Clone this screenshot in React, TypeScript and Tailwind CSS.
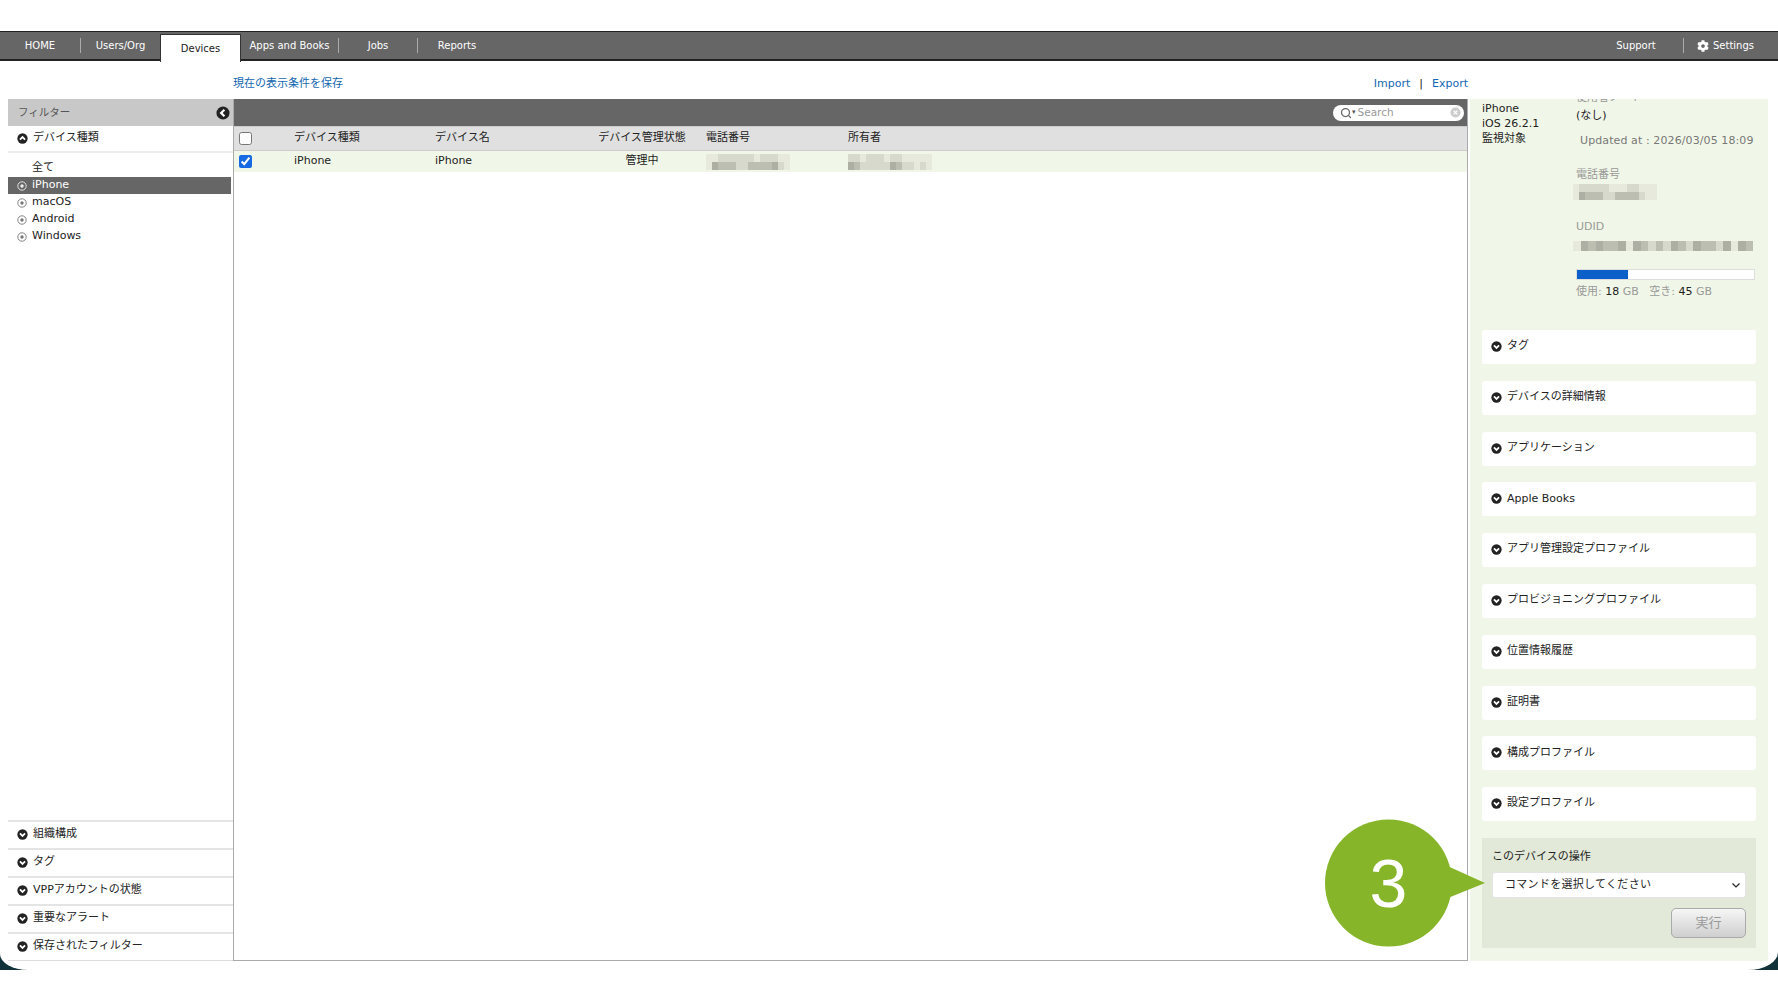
import { Search } from "lucide-react";
import { FaCog } from "react-icons/fa";

const FONT = "font-['DejaVu_Sans','Noto_Sans_CJK_JP',sans-serif]";

const Chevron = ({ up = false, left = false, size = 11 }: { up?: boolean; left?: boolean; size?: number }) => (
  <svg width={size} height={size} viewBox="0 0 12 12" className="shrink-0">
    <circle cx="6" cy="6" r="5.6" fill="#222" />
    <path
      d={left ? "M7.2 3.2 4.4 6l2.8 2.8" : up ? "M3.2 7.2 6 4.4l2.8 2.8" : "M3.2 4.8 6 7.6l2.8-2.8"}
      fill="none"
      stroke="#fff"
      strokeWidth="1.9"
    />
  </svg>
);

const Bullet = ({ light = false }: { light?: boolean }) => (
  <svg width="10" height="10" viewBox="0 0 10 10" className="shrink-0">
    <circle cx="5" cy="5" r="4.2" fill="none" stroke={light ? "#eee" : "#777"} strokeWidth="0.9" />
    <circle cx="5" cy="5" r="1.7" fill={light ? "#eee" : "#777"} />
  </svg>
);

// pixelated blocks standing in for the blurred-out values
const Mosaic = ({ rows, cell, h }: { rows: string[][]; cell: number; h: number }) => (
  <div className="flex flex-col">
    {rows.map((row, i) => (
      <div key={i} className="flex">
        {row.map((c, j) => (
          <div key={j} className={c} style={{ width: cell, height: h }} />
        ))}
      </div>
    ))}
  </div>
);

const L = "bg-[#e6e9dc]";
const M = "bg-[#d6d9cc]";
const D = "bg-[#bcbeb2]";
const X = "bg-[#adafa4]";

const phoneRows = [
  [L, M, M, M, M, M, L, L, L, M, M, L, L, L],
  [L, X, D, D, D, M, M, D, D, D, D, M, L, L],
];
const tablePhoneRows = [
  [L, L, M, M, M, M, M, M, L, M, M, M, L, L],
  [L, X, D, D, D, M, M, D, D, D, D, X, M, L],
];
const ownerRows = [
  [M, M, L, M, M, M, L, M, M, L, L, L, L, L],
  [X, D, M, M, M, M, M, X, D, M, M, L, M, L],
];
const udidRows = [[L, X, D, X, D, D, X, L, X, D, M, D, M, X, D, M, X, D, D, M, X, L, X, D]];

const CARDS = [
  "タグ",
  "デバイスの詳細情報",
  "アプリケーション",
  "Apple Books",
  "アプリ管理設定プロファイル",
  "プロビジョニングプロファイル",
  "位置情報履歴",
  "証明書",
  "構成プロファイル",
  "設定プロファイル",
];

const FILTERS = ["組織構成", "タグ", "VPPアカウントの状態", "重要なアラート", "保存されたフィルター"];

const NavItem = ({ label, className }: { label: string; className: string }) => (
  <div className={`flex items-center justify-center text-white ${className}`}>{label}</div>
);

const Divider = () => <div className="w-px h-[15px] bg-[#aaa]" />;

const Navbar = () => (
  <nav className="h-[30px] bg-[#666] border-t border-t-[#222] border-b-2 border-b-[#222] flex items-center text-[10px] shrink-0">
    <NavItem label="HOME" className="w-[80px]" />
    <Divider />
    <NavItem label="Users/Org" className="w-[79px]" />
    <div className="w-[81px] h-[28px] mt-[3px] bg-white border-t border-x border-[#333] flex items-center justify-center text-[#222] -mb-[2px]">
      Devices
    </div>
    <NavItem label="Apps and Books" className="w-[97px]" />
    <Divider />
    <NavItem label="Jobs" className="w-[78px]" />
    <Divider />
    <NavItem label="Reports" className="w-[78px]" />
    <div className="flex-1" />
    <NavItem label="Support" className="w-[50px]" />
    <div className="w-[22px]" />
    <Divider />
    <FaCog className="text-white ml-[13px] mr-[4px]" size={12} />
    <NavItem label="Settings" className="mr-[24px]" />
  </nav>
);

const Sidebar = () => (
  <aside className="w-[225px] ml-[8px] flex flex-col shrink-0 text-[11px] text-[#222]">
    <div className="h-[27px] bg-[#c8c8c8] flex items-center justify-between pl-[10px] pr-[3px] text-[#555] text-[10.5px]">
      <span>フィルター</span>
      <Chevron left size={14} />
    </div>
    <div className="h-[28px] border-b-2 border-[#eee] flex items-center gap-[5px] pl-[9px] mt-[-1px]">
      <Chevron up />
      <span>デバイス種類</span>
    </div>
    <div className="flex-1 pt-[6px] pr-[2px]">
      <div className="h-[17px] pl-[24px] mt-[1px] flex items-center">全て</div>
      {["iPhone", "macOS", "Android", "Windows"].map((os, i) => (
        <div
          key={os}
          className={`h-[17px] flex items-center gap-[5px] pl-[9px] ${i === 0 ? "bg-[#666] text-white" : ""}`}
        >
          <Bullet light={i === 0} />
          {os}
        </div>
      ))}
    </div>
    {FILTERS.map((f) => (
      <div key={f} className="h-[28px] border-t-2 border-[#e4e4e4] flex items-center gap-[5px] pl-[9px] pb-[2px]">
        <Chevron />
        <span>{f}</span>
      </div>
    ))}
    <div className="h-[1px] bg-[#ddd]" />
  </aside>
);

const DeviceTable = () => (
  <main className="flex-1 flex flex-col border-x border-b border-[#aaa] text-[11px] text-[#222]">
    <div className="h-[27px] bg-[#666] flex items-center justify-end pr-[3px] shrink-0">
      <div className="w-[131px] h-[16px] bg-white rounded-full flex items-center pl-[7px] pr-[3px] text-[#999] text-[10.5px]">
        <Search size={12} strokeWidth={2.5} className="text-[#666]" />
        <span className="text-[#555] text-[7px] mr-[2px]">▾</span>
        <span className="flex-1">Search</span>
        <svg width="11" height="11" viewBox="0 0 12 12">
          <circle cx="6" cy="6" r="5.5" fill="#ccc" />
          <path d="M4 4l4 4M8 4l-4 4" stroke="#fff" strokeWidth="1.4" />
        </svg>
      </div>
    </div>
    <div className="h-[25px] bg-[#e0e0e0] border-t border-b border-[#ccc] flex items-center shrink-0">
      <div className="w-[60px] pl-[5px] flex items-center">
        <input type="checkbox" readOnly className="w-[13px] h-[13px]" />
      </div>
      <div className="w-[141px]">デバイス種類</div>
      <div className="w-[143px]">デバイス名</div>
      <div className="w-[128px] text-center">デバイス管理状態</div>
      <div className="w-[142px]">電話番号</div>
      <div>所有者</div>
    </div>
    <div className="h-[21px] bg-[#f1f7e8] flex items-center shrink-0">
      <div className="w-[60px] pl-[5px] flex items-center">
        <input type="checkbox" checked readOnly className="w-[13px] h-[13px] accent-[#1668e3]" />
      </div>
      <div className="w-[141px]">iPhone</div>
      <div className="w-[143px]">iPhone</div>
      <div className="w-[128px] text-center">管理中</div>
      <div className="w-[142px]">
        <Mosaic rows={tablePhoneRows} cell={6} h={8} />
      </div>
      <div>
        <Mosaic rows={ownerRows} cell={6} h={8} />
      </div>
    </div>
  </main>
);

const DetailPanel = () => (
  <section className="w-[298px] ml-[2px] mr-[10px] px-[12px] bg-[#f1f7e8] flex flex-col text-[11px] text-[#222] overflow-hidden shrink-0">
    <div className="h-[231px] flex shrink-0">
      <div className="w-[94px] pt-[2px] leading-[15px]">
        <div>iPhone</div>
        <div>iOS 26.2.1</div>
        <div>監視対象</div>
      </div>
      <div className="flex-1 relative">
        <div className="absolute top-[-9px] left-0 text-[#999] leading-[15px]">使用者ノート</div>
        <div className="pt-[9px] leading-[15px]">(なし)</div>
        <div className="pt-[10px] pl-[4px] text-[#777] leading-[15px] tracking-[0.1px] whitespace-nowrap">
          Updated at : 2026/03/05 18:09
        </div>
        <div className="pt-[19px] text-[#999] leading-[15px]">電話番号</div>
        <div className="mt-[2px] -ml-[3px]">
          <Mosaic rows={phoneRows} cell={6} h={8} />
        </div>
        <div className="pt-[19px] text-[#999] leading-[15px]">UDID</div>
        <div className="mt-[7px] -ml-[3px]">
          <Mosaic rows={udidRows} cell={7.5} h={10} />
        </div>
        <div className="mt-[18px] h-[11px] bg-white border border-[#ddd] w-[179px]">
          <div className="h-full w-[51px] bg-[#0a60c8]" />
        </div>
        <div className="mt-[4px] text-[#999] leading-[15px] whitespace-nowrap">
          使用: <span className="text-[#222]">18</span> GB&nbsp;&nbsp; 空き: <span className="text-[#222]">45</span> GB
        </div>
      </div>
    </div>
    <div className="flex flex-col gap-[16.8px] shrink-0">
      {CARDS.map((c) => (
        <div key={c} className="h-[34px] bg-white rounded-[3px] flex items-center gap-[5px] pl-[9px] pb-[1px]">
          <Chevron />
          <span>{c}</span>
        </div>
      ))}
    </div>
    <div className="mt-[17px] h-[110px] bg-[#e2e9d8] px-[10px] pt-[11px] shrink-0">
      <div className="leading-[15px]">このデバイスの操作</div>
      <div className="mt-[8px] h-[26px] bg-white rounded-[3px] border border-[#e4e4e4] flex items-center justify-between pl-[12px] pr-[3px]">
        <span className="tracking-[0.3px]">コマンドを選択してください</span>
        <svg width="12" height="12" viewBox="0 0 12 12">
          <path d="M2.5 4.5 6 8l3.5-3.5" fill="none" stroke="#222" strokeWidth="1.2" />
        </svg>
      </div>
      <div className="mt-[10px] flex justify-end">
        <div className="w-[75px] h-[30px] rounded-[5px] border border-[#aaa] bg-gradient-to-b from-[#f6f6f6] to-[#cfcfcf] flex items-center justify-center text-[#999] text-[13px]">
          実行
        </div>
      </div>
    </div>
  </section>
);

const Callout = () => (
  <div className="absolute left-[1325px] top-[819px] w-[162px] h-[128px] pointer-events-none">
    <svg width="162" height="128" viewBox="0 0 162 128">
      <circle cx="63.5" cy="64" r="63.5" fill="#86b52a" />
      <path d="M118 45 160 64 118 81Z" fill="#86b52a" />
    </svg>
    <div className="absolute left-0 top-0 w-[127px] h-[128px] flex items-center justify-center text-white text-[68px] font-['Liberation_Sans',sans-serif] leading-none">
      3
    </div>
  </div>
);

export default function App() {
  return (
    <div className={`relative w-[1778px] h-[1000px] bg-white overflow-hidden ${FONT}`}>
      <div className="h-[31px] bg-white" />
      <div className="h-[939px] bg-[#12323a]">
        <div className="h-full bg-white flex flex-col rounded-bl-[28px_16px] rounded-br-[30px_18px]">
          <Navbar />
          <div className="h-[38px] shrink-0 flex items-end justify-between pb-[7px] pl-[233px] pr-[310px] text-[11px] text-[#1367b0]">
            <span>現在の表示条件を保存</span>
            <span>
              Import<span className="text-[#222] mx-[9px]">|</span>Export
            </span>
          </div>
          <div className="h-[862px] flex">
            <Sidebar />
            <DeviceTable />
            <DetailPanel />
          </div>
        </div>
      </div>
      <Callout />
    </div>
  );
}
